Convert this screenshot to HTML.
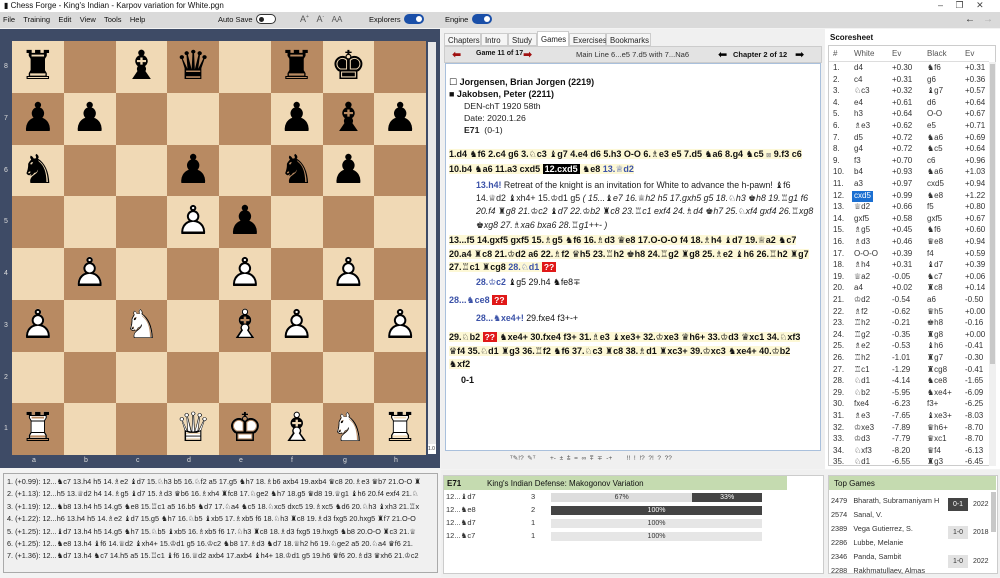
<!DOCTYPE html>
<html><head><meta charset="utf-8"><style>
*{margin:0;padding:0;box-sizing:border-box}
body{width:1000px;height:577px;overflow:hidden;background:#f3f3f3;font-family:"Liberation Sans","DejaVu Sans",sans-serif;color:#111;position:relative;font-size:8px}
.a{position:absolute;white-space:nowrap}
.sq{position:absolute;width:51.75px;height:51.75px;font-family:"DejaVu Sans",sans-serif;font-size:40px;line-height:50px;text-align:center;color:#000}
.sq span{position:absolute;left:0;top:0;width:100%}
.mv{font-weight:bold;font-size:9px}
.fg{font-family:"DejaVu Sans",sans-serif}
.bl{color:#3b52a8}
.qq{background:#e01818;color:#fff;font-weight:bold;padding:0 2px;font-size:8.5px}
.row{position:absolute;left:830px;width:160px;height:11.6px;font-size:8px;color:#333}
.row span{position:absolute;top:0}
</style></head><body>
<div class="a" style="left:0;top:0;width:1000px;height:12px;background:#fff"></div>
<div class="a" style="left:4px;top:1px;font-size:8px">▮ Chess Forge - King's Indian - Karpov variation for White.pgn</div>
<div class="a" style="left:938px;top:0;font-size:9px;color:#444">–&nbsp;&nbsp;&nbsp;&nbsp;&nbsp;❐&nbsp;&nbsp;&nbsp;&nbsp;&nbsp;✕</div>
<div class="a" style="left:0;top:12px;width:1000px;height:16px;background:#dadada"></div>
<div class="a" style="left:3px;top:15px;font-size:7.5px">File&nbsp;&nbsp;&nbsp; Training&nbsp;&nbsp;&nbsp; Edit&nbsp;&nbsp;&nbsp; View&nbsp;&nbsp;&nbsp; Tools&nbsp;&nbsp;&nbsp; Help</div>
<div class="a" style="left:218px;top:15px;font-size:7.5px">Auto Save</div>
<div class="a" style="left:256px;top:14px;width:20px;height:10px;border:1px solid #333;border-radius:6px;background:#fff"></div>
<div class="a" style="left:259px;top:17px;width:5px;height:5px;border-radius:50%;background:#222"></div>
<div class="a" style="left:300px;top:14px;font-size:9px;color:#555">A<sup style="font-size:5px">+</sup>&nbsp;&nbsp;&nbsp;A<sup style="font-size:5px">-</sup>&nbsp;&nbsp;&nbsp;<span style="font-size:8px">AA</span></div>
<div class="a" style="left:369px;top:15px;font-size:7.5px">Explorers</div>
<div class="a" style="left:404px;top:14px;width:20px;height:10px;border-radius:6px;background:#1a4fa8"></div>
<div class="a" style="left:416px;top:16px;width:6px;height:6px;border-radius:50%;background:#fff"></div>
<div class="a" style="left:445px;top:15px;font-size:7.5px">Engine</div>
<div class="a" style="left:472px;top:14px;width:20px;height:10px;border-radius:6px;background:#1a4fa8"></div>
<div class="a" style="left:484px;top:16px;width:6px;height:6px;border-radius:50%;background:#fff"></div>
<div class="a" style="left:965px;top:14px;font-size:10px;color:#222;font-weight:bold">←</div>
<div class="a" style="left:983px;top:14px;font-size:10px;color:#aaa">→</div>

<div class="a" style="left:0;top:29px;width:440px;height:439px;background:#3e4b66"></div>
<div class="a" style="left:428px;top:42px;width:8px;height:412px;background:#e8e8e8"></div>
<div class="a" style="left:428px;top:444px;width:8px;height:10px;background:#fff;font-size:5px;color:#333;padding-top:2px">1.0</div>
<div id="board" class="a" style="left:12px;top:41px;width:414px;height:414px"></div>
<div class="a" style="left:0;top:457px;width:440px;font-size:7px;color:#ddd">
<span class="a" style="left:32px">a</span><span class="a" style="left:84px">b</span><span class="a" style="left:136px">c</span><span class="a" style="left:187px">d</span><span class="a" style="left:239px">e</span><span class="a" style="left:291px">f</span><span class="a" style="left:343px">g</span><span class="a" style="left:394px">h</span></div>
<div class="a" style="left:4px;top:41px;font-size:7px;color:#ddd;line-height:51.75px">8<br>7<br>6<br>5<br>4<br>3<br>2<br>1</div>

<div class="a" style="left:3px;top:473px;width:435px;height:100px;background:#f0f0f0;border:1px solid #aaa;overflow:hidden;padding:2px 3px;font-size:7.3px;line-height:12.4px;color:#222">
1. (+0.99): 12...♞c7 13.h4 h5 14.♗e2 ♝d7 15.♘h3 b5 16.♘f2 a5 17.g5 ♞h7 18.♗b6 axb4 19.axb4 ♛c8 20.♗e3 ♛b7 21.O-O ♜<br>
2. (+1.13): 12...h5 13.♕d2 h4 14.♗g5 ♝d7 15.♗d3 ♛b6 16.♗xh4 ♜fc8 17.♘ge2 ♞h7 18.g5 ♛d8 19.♕g1 ♝h6 20.f4 exf4 21.♘<br>
3. (+1.19): 12...♞b8 13.h4 h5 14.g5 ♞e8 15.♖c1 a5 16.b5 ♞d7 17.♘a4 ♞c5 18.♘xc5 dxc5 19.♗xc5 ♞d6 20.♘h3 ♝xh3 21.♖x<br>
4. (+1.22): 12...h6 13.h4 h5 14.♗e2 ♝d7 15.g5 ♞h7 16.♘b5 ♝xb5 17.♗xb5 f6 18.♘h3 ♜c8 19.♗d3 fxg5 20.hxg5 ♜f7 21.O-O<br>
5. (+1.25): 12...♝d7 13.h4 h5 14.g5 ♞h7 15.♘b5 ♝xb5 16.♗xb5 f6 17.♘h3 ♜c8 18.♗d3 fxg5 19.hxg5 ♞b8 20.O-O ♜c3 21.♕<br>
6. (+1.25): 12...♞e8 13.h4 ♝f6 14.♕d2 ♝xh4+ 15.♔d1 g5 16.♔c2 ♞b8 17.♗d3 ♞d7 18.♕h2 h6 19.♘ge2 a5 20.♘a4 ♛f6 21.<br>
7. (+1.36): 12...♞d7 13.h4 ♞c7 14.h5 a5 15.♖c1 ♝f6 16.♕d2 axb4 17.axb4 ♝h4+ 18.♔d1 g5 19.h6 ♛f6 20.♗d3 ♛xh6 21.♔c2
</div>

<div class="a" style="left:441px;top:29px;width:384px;height:440px;background:#f0f0f0"></div>
<div class="a" style="left:444px;top:33px;font-size:7.8px;color:#222">
<span class="a" style="left:0;top:0;width:37px;height:13px;border:1px solid #ccc;background:#f5f5f5;padding:2px 3px">Chapters</span>
<span class="a" style="left:37px;top:0;width:27px;height:13px;border:1px solid #ccc;background:#f5f5f5;padding:2px 3px">Intro</span>
<span class="a" style="left:64px;top:0;width:29px;height:13px;border:1px solid #ccc;background:#f5f5f5;padding:2px 3px">Study</span>
<span class="a" style="left:93px;top:-2px;width:32px;height:15px;border:1px solid #ccc;border-bottom:none;background:#fff;padding:3px 3px">Games</span>
<span class="a" style="left:125px;top:0;width:37px;height:13px;border:1px solid #ccc;background:#f5f5f5;padding:2px 3px">Exercises</span>
<span class="a" style="left:162px;top:0;width:45px;height:13px;border:1px solid #ccc;background:#f5f5f5;padding:2px 3px">Bookmarks</span>
</div>
<div class="a" style="left:444px;top:46px;width:378px;height:17px;background:#e3e3e3;border:1px solid #ccc"></div>
<div class="a" style="left:452px;top:48px;font-size:11px;color:#a01010;font-weight:bold">⬅</div>
<div class="a" style="left:476px;top:50px;font-size:7px;font-weight:bold">Game 11 of 17</div>
<div class="a" style="left:523px;top:48px;font-size:11px;color:#a01010;font-weight:bold">➡</div>
<div class="a" style="left:576px;top:50px;font-size:7.6px;color:#333">Main Line 6...e5 7.d5 with 7...Na6</div>
<div class="a" style="left:718px;top:48px;font-size:11px;color:#000">⬅</div>
<div class="a" style="left:733px;top:50px;font-size:7.5px;font-weight:bold">Chapter 2 of 12</div>
<div class="a" style="left:795px;top:48px;font-size:11px;color:#000">➡</div>
<div class="a" style="left:445px;top:63px;width:376px;height:388px;background:#fff;border:1px solid #a9c0dc"></div>
<div class="a" style="left:449px;top:76px;font-size:9px;font-weight:bold;line-height:12px">☐ Jorgensen, Brian Jorgen (2219)<br>■ Jakobsen, Peter (2211)</div>
<div class="a" style="left:464px;top:100px;font-size:8.7px;line-height:12px;color:#222">DEN-chT 1920 58th<br>Date: 2020.1.26<br><b>E71</b>&nbsp; (0-1)</div>
<div class="a mv" style="left:449px;top:148px;width:356px;line-height:12.5px;white-space:normal"><span style="background:#fdf8d6">1.d4 <span class="fg">♞</span>f6 2.c4 g6 3.<span class="fg">♘</span>c3 <span class="fg">♝</span>g7 4.e4 d6 5.h3 O-O 6.<span class="fg">♗</span>e3 e5 7.d5 <span class="fg">♞</span>a6 8.g4 <span class="fg">♞</span>c5 <span style="font-size:6px;color:#888">⊠</span> 9.f3 c6 10.b4 <span class="fg">♞</span>a6 11.a3 cxd5 <span style="background:#000;color:#fff;padding:0 2px">12.cxd5</span> <span class="fg">♞</span>e8 <span class="bl">13.<span class="fg">♕</span>d2</span></span></div>
<div class="a" style="left:476px;top:179px;width:340px;font-size:8.8px;line-height:12.2px;white-space:normal;color:#222"><b class="bl">13.h4!</b> Retreat of the knight is an invitation for White to advance the h-pawn! <span class="fg">♝</span>f6 14.<span class="fg">♕</span>d2 <span class="fg">♝</span>xh4+ 15.<span class="fg">♔</span>d1 g5 <i>( 15...<span class="fg">♝</span>e7 16.<span class="fg">♕</span>h2 h5 17.gxh5 g5 18.<span class="fg">♘</span>h3 <span class="fg">♚</span>h8 19.<span class="fg">♖</span>g1 f6 20.f4 <span class="fg">♜</span>g8 21.<span class="fg">♔</span>c2 <span class="fg">♝</span>d7 22.<span class="fg">♔</span>b2 <span class="fg">♜</span>c8 23.<span class="fg">♖</span>c1 exf4 24.<span class="fg">♗</span>d4 <span class="fg">♚</span>h7 25.<span class="fg">♘</span>xf4 gxf4 26.<span class="fg">♖</span>xg8 <span class="fg">♚</span>xg8 27.<span class="fg">♗</span>xa6 bxa6 28.<span class="fg">♖</span>g1++- )</i></div>
<div class="a mv" style="left:449px;top:234px;width:368px;line-height:12.5px;white-space:normal"><span style="background:#fdf8d6">13...f5 14.gxf5 gxf5 15.<span class="fg">♗</span>g5 <span class="fg">♞</span>f6 16.<span class="fg">♗</span>d3 <span class="fg">♛</span>e8 17.O-O-O f4 18.<span class="fg">♗</span>h4 <span class="fg">♝</span>d7 19.<span class="fg">♕</span>a2 <span class="fg">♞</span>c7 20.a4 <span class="fg">♜</span>c8 21.<span class="fg">♔</span>d2 a6 22.<span class="fg">♗</span>f2 <span class="fg">♛</span>h5 23.<span class="fg">♖</span>h2 <span class="fg">♚</span>h8 24.<span class="fg">♖</span>g2 <span class="fg">♜</span>g8 25.<span class="fg">♗</span>e2 <span class="fg">♝</span>h6 26.<span class="fg">♖</span>h2 <span class="fg">♜</span>g7 27.<span class="fg">♖</span>c1 <span class="fg">♜</span>cg8 <span class="bl">28.<span class="fg">♘</span>d1</span> <span class="qq">??</span></span></div>
<div class="a" style="left:476px;top:277px;font-size:8.8px"><b class="bl">28.<span class="fg">♔</span>c2</b> <span class="fg">♝</span>g5 29.h4 <span class="fg">♞</span>fe8∓</div>
<div class="a mv bl" style="left:449px;top:295px">28...<span class="fg">♞</span>ce8 <span class="qq">??</span></div>
<div class="a" style="left:476px;top:313px;font-size:8.8px"><b class="bl">28...<span class="fg">♞</span>xe4+!</b> 29.fxe4 f3+-+</div>
<div class="a mv" style="left:449px;top:331px;width:352px;line-height:12.5px;white-space:normal"><span style="background:#fdf8d6">29.<span class="fg">♘</span>b2 <span class="qq">??</span> <span class="fg">♞</span>xe4+ 30.fxe4 f3+ 31.<span class="fg">♗</span>e3 <span class="fg">♝</span>xe3+ 32.<span class="fg">♔</span>xe3 <span class="fg">♛</span>h6+ 33.<span class="fg">♔</span>d3 <span class="fg">♛</span>xc1 34.<span class="fg">♘</span>xf3 <span class="fg">♛</span>f4 35.<span class="fg">♘</span>d1 <span class="fg">♜</span>g3 36.<span class="fg">♖</span>f2 <span class="fg">♞</span>f6 37.<span class="fg">♘</span>c3 <span class="fg">♜</span>c8 38.<span class="fg">♗</span>d1 <span class="fg">♜</span>xc3+ 39.<span class="fg">♔</span>xc3 <span class="fg">♞</span>xe4+ 40.<span class="fg">♔</span>b2 <span class="fg">♞</span>xf2</span></div>
<div class="a mv" style="left:461px;top:375px">0-1</div>
<div class="a" style="left:510px;top:454px;font-size:6.5px;color:#555">ᵀ✎!?&nbsp; ✎ᵀ&nbsp;&nbsp;&nbsp;&nbsp;&nbsp;&nbsp;&nbsp; +- &nbsp;± &nbsp;⩲ &nbsp;= &nbsp;∞ &nbsp;⩱ &nbsp;∓ &nbsp;-+&nbsp;&nbsp;&nbsp;&nbsp;&nbsp;&nbsp;&nbsp; !! &nbsp;! &nbsp;!? &nbsp;?! &nbsp;? &nbsp;??</div>

<div class="a" style="left:825px;top:29px;width:175px;height:440px;background:#fff"></div>
<div class="a" style="left:830px;top:33px;font-size:8px;font-weight:bold">Scoresheet</div>
<div class="a" style="left:828px;top:45px;width:168px;height:421px;border:1px solid #ccc;overflow:hidden"></div>
<div class="a" style="left:989px;top:62px;width:7px;height:404px;background:#f0f0f0"></div>
<div class="a" style="left:990px;top:64px;width:5px;height:300px;background:#c8c8c8"></div>
<div id="ss"></div>

<div class="a" style="left:441px;top:470px;width:384px;height:107px;background:#f0f0f0"></div>
<div class="a" style="left:443px;top:475px;width:381px;height:99px;background:#fff;border:1px solid #ccc"></div>
<div class="a" style="left:444px;top:476px;width:343px;height:14px;background:#c5dbb0"></div>
<div class="a" style="left:447px;top:479px;font-size:8px"><b>E71</b></div>
<div class="a" style="left:487px;top:479px;font-size:8px">King's Indian Defense: Makogonov Variation</div>
<div id="ex"></div>

<div class="a" style="left:825px;top:470px;width:175px;height:107px;background:#f0f0f0"></div>
<div class="a" style="left:828px;top:475px;width:170px;height:99px;background:#fff;border:1px solid #ccc"></div>
<div class="a" style="left:829px;top:476px;width:167px;height:14px;background:#c5dbb0"></div>
<div class="a" style="left:834px;top:479px;font-size:8px">Top Games</div>
<div class="a" style="left:991px;top:492px;width:5px;height:40px;background:#c8c8c8"></div>
<div class="a" style="left:831px;top:494px;font-size:7.3px;line-height:14px;color:#333">2479&nbsp;&nbsp; Bharath, Subramaniyam H<br>2574&nbsp;&nbsp; Sanal, V.</div>
<div class="a" style="left:948px;top:498px;width:20px;height:13px;background:#444;color:#fff;font-size:7px;text-align:center;line-height:13px">0-1</div>
<div class="a" style="left:973px;top:501px;font-size:7px;color:#333">2022</div>
<div class="a" style="left:831px;top:522px;font-size:7.3px;line-height:14px;color:#333">2389&nbsp;&nbsp; Vega Gutierrez, S.<br>2286&nbsp;&nbsp; Lubbe, Melanie</div>
<div class="a" style="left:948px;top:526px;width:20px;height:13px;background:#e2e2e2;color:#333;font-size:7px;text-align:center;line-height:13px">1-0</div>
<div class="a" style="left:973px;top:529px;font-size:7px;color:#333">2018</div>
<div class="a" style="left:831px;top:550px;font-size:7.3px;line-height:14px;color:#333">2346&nbsp;&nbsp; Panda, Sambit<br>2288&nbsp;&nbsp; Rakhmatullaev, Almas</div>
<div class="a" style="left:948px;top:555px;width:20px;height:13px;background:#e2e2e2;color:#333;font-size:7px;text-align:center;line-height:13px">1-0</div>
<div class="a" style="left:973px;top:558px;font-size:7px;color:#333">2022</div>

<script>
var pos=["r.bq.rk.","pp...pbp","n..p.np.","...Pp...",".P..P.P.","P.N.BP.P","........","R..QKBNR"];
var g={k:"♚",q:"♛",r:"♜",b:"♝",n:"♞",p:"♟"};
var go={k:"♔",q:"♕",r:"♖",b:"♗",n:"♘",p:"♙"};
var b=document.getElementById("board"),h="";
for(var r=0;r<8;r++)for(var c=0;c<8;c++){
 var ch=pos[r][c],lt=(r+c)%2==0,bg=lt?"#f0d9b5":"#b88a62",t="";
 if(ch!="."){var up=ch==ch.toUpperCase(),l=ch.toLowerCase();
  t=up?'<span style="color:#fff">'+g[l]+'</span><span style="color:#000">'+go[l]+'</span>':'<span>'+g[l]+'</span>';}
 h+='<div class="sq" style="left:'+(c*51.75)+'px;top:'+(r*51.75)+'px;background:'+bg+'">'+t+'</div>';}
b.innerHTML=h;
var rows=[["d4","+0.30","♞f6","+0.31"],["c4","+0.31","g6","+0.36"],["♘c3","+0.32","♝g7","+0.57"],["e4","+0.61","d6","+0.64"],["h3","+0.64","O-O","+0.67"],["♗e3","+0.62","e5","+0.71"],["d5","+0.72","♞a6","+0.69"],["g4","+0.72","♞c5","+0.64"],["f3","+0.70","c6","+0.96"],["b4","+0.93","♞a6","+1.03"],["a3","+0.97","cxd5","+0.94"],["cxd5","+0.99","♞e8","+1.22"],["♕d2","+0.66","f5","+0.80"],["gxf5","+0.58","gxf5","+0.67"],["♗g5","+0.45","♞f6","+0.60"],["♗d3","+0.46","♛e8","+0.94"],["O-O-O","+0.39","f4","+0.59"],["♗h4","+0.31","♝d7","+0.39"],["♕a2","-0.05","♞c7","+0.06"],["a4","+0.02","♜c8","+0.14"],["♔d2","-0.54","a6","-0.50"],["♗f2","-0.62","♛h5","+0.00"],["♖h2","-0.21","♚h8","-0.16"],["♖g2","-0.35","♜g8","+0.00"],["♗e2","-0.53","♝h6","-0.41"],["♖h2","-1.01","♜g7","-0.30"],["♖c1","-1.29","♜cg8","-0.41"],["♘d1","-4.14","♞ce8","-1.65"],["♘b2","-5.95","♞xe4+","-6.09"],["fxe4","-6.23","f3+","-6.25"],["♗e3","-7.65","♝xe3+","-8.03"],["♔xe3","-7.89","♛h6+","-8.70"],["♔d3","-7.79","♛xc1","-8.70"],["♘xf3","-8.20","♛f4","-6.13"],["♘d1","-6.55","♜g3","-6.45"]];
var s='<div class="row" style="top:49px;color:#555"><span style="left:3px">#</span><span style="left:24px">White</span><span style="left:62px">Ev</span><span style="left:97px">Black</span><span style="left:135px">Ev</span></div>';
s+='<div class="a" style="left:829px;top:61px;width:160px;border-top:1px solid #ddd"></div>';
for(var i=0;i<rows.length;i++){var y=63+i*11.6;if(y>458)break;var R=rows[i];
 var wc=i==11?'background:#1b6fd1;color:#fff;padding:0 2px;left:22px;height:11px':'left:24px';
 s+='<div class="row" style="top:'+y+'px;overflow:hidden"><span style="left:3px">'+(i+1)+'.</span><span style="'+wc+'">'+R[0]+'</span><span style="left:62px">'+R[1]+'</span><span style="left:97px">'+R[2]+'</span><span style="left:135px">'+R[3]+'</span></div>';}
document.getElementById("ss").innerHTML=s;
var ex=[["12...♝d7","3",[[67,"#ddd","#333","67%"],[33,"#444","#fff","33%"]]],["12...♞e8","2",[[100,"#444","#fff","100%"]]],["12...♞d7","1",[[100,"#e6e6e6","#333","100%"]]],["12...♞c7","1",[[100,"#e6e6e6","#333","100%"]]]];
var e="";
for(var i=0;i<4;i++){var y=492+i*13;e+='<div class="a" style="left:446px;top:'+y+'px;font-size:7.5px;color:#333">'+ex[i][0]+'</div><div class="a" style="left:531px;top:'+y+'px;font-size:7.5px;color:#333">'+ex[i][1]+'</div>';
 var x=551;ex[i][2].forEach(function(p){var w=p[0]*2.11;e+='<div class="a" style="left:'+x+'px;top:'+(y+1)+'px;width:'+w+'px;height:9px;background:'+p[1]+';color:'+p[2]+';font-size:7px;text-align:center;line-height:9px">'+p[3]+'</div>';x+=w;});}
document.getElementById("ex").innerHTML=e;
</script>
</body></html>
